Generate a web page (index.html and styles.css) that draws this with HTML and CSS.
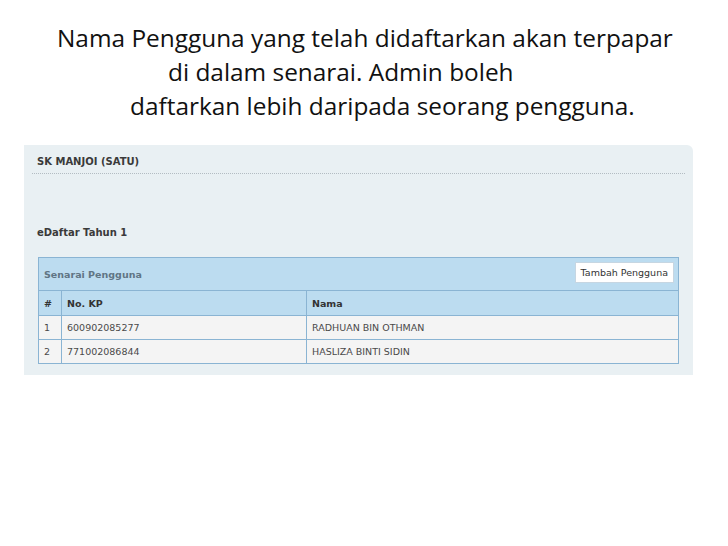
FILE: index.html
```html
<!DOCTYPE html>
<html lang="ms">
<head>
  <meta charset="utf-8">
  <title>eDaftar - Senarai Pengguna</title>
  <link rel="stylesheet" href="styles.css">
</head>
<body>
  <!-- Slide caption -->
  <div class="caption">
    <div class="line line-1">Nama Pengguna yang telah didaftarkan akan terpapar</div>
    <div class="line line-2">di dalam senarai. Admin boleh</div>
    <div class="line line-3">daftarkan lebih daripada seorang pengguna.</div>
  </div>

  <!-- Screenshot panel -->
  <div class="panel">
    <div class="school">SK MANJOI (SATU)</div>
    <div class="section-title">eDaftar Tahun 1</div>

    <table class="users">
      <tr class="users-head">
        <th colspan="3">
          <div class="users-head-inner">
            <span>Senarai Pengguna</span>
            <button class="btn-add">Tambah Pengguna</button>
          </div>
        </th>
      </tr>
      <tr class="cols">
        <th class="col-no">#</th>
        <th class="col-kp">No. KP</th>
        <th>Nama</th>
      </tr>
      <tr>
        <td>1</td>
        <td>600902085277</td>
        <td>RADHUAN BIN OTHMAN</td>
      </tr>
      <tr>
        <td>2</td>
        <td>771002086844</td>
        <td>HASLIZA BINTI SIDIN</td>
      </tr>
    </table>
  </div>
</body>
</html>
```

FILE: styles.css
```css
html, body {
  margin: 0;
  padding: 0;
}

body {
  background: #fff;
  font-family: 'DejaVu Sans', sans-serif;
  width: 728px;
  height: 546px;
  overflow: hidden;
}

/* Caption */
.caption {
  padding-top: 21px;
  height: 125px;
  box-sizing: border-box;
  font-family: 'Open Sans', sans-serif;
  font-size: 24.4px;
  line-height: 34px;
  color: #111;
}

.line-1 { padding-left: 57px; }
.line-2 { padding-left: 168px; }
.line-3 { padding-left: 130px; }

/* Panel */
.panel {
  margin: 20px 0 0 24px;
  width: 669px;
  height: 230px;
  box-sizing: border-box;
  background: #e9f0f3;
  border-radius: 0 6px 0 0;
  padding: 11px 8px 0 8px;
}

.school {
  font-size: 10px;
  font-weight: bold;
  color: #3a3a3a;
  padding: 0 0 6px 5px;
  border-bottom: 1px dotted #b3bcc2;
}

.section-title {
  font-size: 10px;
  font-weight: bold;
  color: #3a3a3a;
  padding: 53px 0 0 5px;
}

/* Table */
.users {
  margin: 19px 0 0 6px;
  width: 641px;
  border-collapse: collapse;
  border: 1px solid #8ab4d3;
  font-size: 9.5px;
  color: #4a4a4a;
}

.users th,
.users td {
  border: 1px solid #8ab4d3;
  text-align: left;
  padding: 0 5px;
}

.users-head th {
  background: #bcdcf0;
  height: 32px;
  padding: 0 4px 0 5px;
}

.users-head-inner {
  display: flex;
  justify-content: space-between;
  align-items: center;
}

.users-head-inner span {
  color: #607585;
  font-weight: bold;
}

.btn-add {
  font-family: 'DejaVu Sans', sans-serif;
  font-size: 9.5px;
  color: #333;
  background: #fff;
  border: 1px solid #c6d6e2;
  height: 21px;
  padding: 0 5px;
  margin-top: -4px;
}

.cols th {
  background: #bcdcf0;
  color: #333;
  height: 24px;
  font-weight: bold;
}

.users td {
  background: #f4f4f4;
  height: 23px;
}

.col-no { width: 12px; }
.col-kp { width: 234px; }
```
